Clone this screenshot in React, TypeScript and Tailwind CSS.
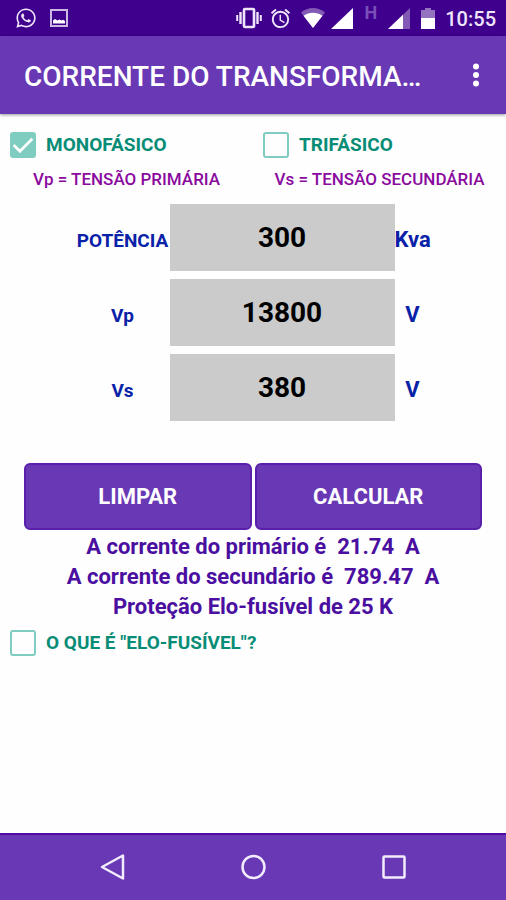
import React, { useState } from "react";
import { FaWhatsapp } from "react-icons/fa";
import { MdAlarm } from "react-icons/md";

type Phase = "mono" | "tri";

interface Result {
  primary: string;
  secondary: string;
  fuse: string;
}

// Corrente máxima (A) de cada elo-fusível
const FUSES: [number, string][] = [
  [1, "1 H"],
  [2, "2 H"],
  [3, "3 H"],
  [5, "5 H"],
  [6, "6 K"],
  [10, "10 K"],
  [15, "15 K"],
  [22, "25 K"],
  [40, "40 K"],
];

function calculate(power: string, vp: string, vs: string, phase: Phase): Result {
  const factor = phase === "tri" ? Math.sqrt(3) : 1;
  const va = Number(power) * 1000;
  const primary = va / (Number(vp) * factor);
  const secondary = va / (Number(vs) * factor);
  const fuse = FUSES.find(([max]) => primary <= max);

  return {
    primary: primary.toFixed(2),
    secondary: secondary.toFixed(2),
    fuse: fuse ? fuse[1] : "65 K",
  };
}

// ----------------------------------------------------
// Barra de status
// ----------------------------------------------------
function StatusBar() {
  return (
    <div className="flex h-9 items-center justify-between bg-[#3f008e] pr-[10px] pl-[15px] text-[#efe6fa]">
      <div className="flex items-center gap-3">
        <FaWhatsapp className="size-[22px]" />
        <svg viewBox="0 0 20 20" className="size-5" fill="none">
          <rect x="2" y="2" width="16" height="16" stroke="currentColor" strokeWidth="2" opacity="0.8" />
          <path d="M4 15.500V12.500l2-1.500 2.500 1.500 2-1 2 1 1.500-.8 2 1.300v2.500z" fill="#fff" />
        </svg>
      </div>
      <div className="flex items-center">
        <svg viewBox="0 0 26 22" className="h-[22px] w-[26px]" fill="none" stroke="currentColor">
          <rect x="8" y="2" width="10" height="18" rx="1" strokeWidth="2.600" />
          <path d="M4.500 5v12M21.500 5v12" strokeWidth="2.400" />
          <path d="M1.200 8v6M24.800 8v6" strokeWidth="2" />
        </svg>
        <MdAlarm className="ml-[7px] size-[23px]" />
        <svg viewBox="0 0 24 20" className="ml-[9px] h-5 w-6">
          <path d="M0 4.500C7-1.500 17-1.500 24 4.500L12 20z" fill="#fff" opacity="0.35" />
          <path d="M2.500 7.800C8 3.800 16 3.800 21.500 7.800L12 20z" fill="#fff" />
        </svg>
        <svg viewBox="0 0 22 21" className="ml-[6px] h-[21px] w-[22px]">
          <path d="M0 21L22 0v21z" fill="#fff" />
        </svg>
        <span className="mb-[10px] ml-[12px] text-lg leading-5 font-bold text-[#7a4fba]">H</span>
        <svg viewBox="0 0 22 21" className="ml-[11px] h-[21px] w-[22px]">
          <path d="M0 21L22 0v21z" fill="#fff" opacity="0.35" />
          <path d="M0 21L15 6.700V21z" fill="#fff" />
        </svg>
        <svg viewBox="0 0 14 21" className="ml-[11px] h-[21px] w-[14px]">
          <path d="M4 0h6v2h4v8H0V2h4z" fill="#fff" opacity="0.45" />
          <path d="M0 10h14v11H0z" fill="#fff" />
        </svg>
        <span className="ml-[10px] pt-[2px] text-xl leading-5 font-medium">10:55</span>
      </div>
    </div>
  );
}

interface CheckProps {
  label: string;
  checked: boolean;
  onChange: () => void;
}

function Check({ label, checked, onChange }: CheckProps) {
  return (
    <label className="flex items-center gap-[10px] text-[19px] leading-6 font-bold text-[#078c76]">
      <span className="relative size-[26px] shrink-0">
        <input
          type="checkbox"
          checked={checked}
          onChange={onChange}
          className="block size-full appearance-none rounded-[3px] border-2 border-[#7fccc1] checked:bg-[#7fccc1]"
        />
        {checked && (
          <svg viewBox="0 0 25 25" className="pointer-events-none absolute inset-0" fill="none">
            <path d="M3.500 12.500l6 6L21.500 6.500" stroke="#fff" strokeWidth="2.600" />
          </svg>
        )}
      </span>
      {label}
    </label>
  );
}

interface FieldProps {
  id: string;
  label: string;
  unit: string;
  value: string;
  onChange: (value: string) => void;
}

function Field({ id, label, unit, value, onChange }: FieldProps) {
  return (
    <div className="grid grid-cols-[94px_225px_36px] items-center justify-center text-center font-bold text-[#0a22a8]">
      <label htmlFor={id} className="pt-[6px] text-[19px] leading-6">
        {label}
      </label>
      <input
        id={id}
        inputMode="decimal"
        value={value}
        onChange={(e) => onChange(e.target.value)}
        className="h-[67px] w-full bg-[#cbcbcb] text-center text-[28px] font-bold text-black outline-none"
      />
      <span className="pt-1 text-[22px] leading-6">{unit}</span>
    </div>
  );
}

interface ActionButtonProps {
  children: React.ReactNode;
  onClick: () => void;
}

function ActionButton({ children, onClick }: ActionButtonProps) {
  return (
    <button
      type="button"
      onClick={onClick}
      className="h-[67px] flex-1 rounded-md border-2 border-[#5a20ab] bg-[#6838b5] text-[22px] font-bold text-white"
    >
      {children}
    </button>
  );
}

function NavBar() {
  return (
    <nav className="flex h-[67px] items-center justify-center gap-[113px] border-t-2 border-[#500aa5] bg-[#6838b5] pb-[2px] text-[#f3ecfc]">
      <button type="button" aria-label="Voltar">
        <svg viewBox="0 0 28 28" className="size-7" fill="none" stroke="currentColor" strokeWidth="2.500" strokeLinejoin="round">
          <path d="M4 14L25 2.500v23z" />
        </svg>
      </button>
      <button type="button" aria-label="Início">
        <svg viewBox="0 0 28 28" className="size-7" fill="none" stroke="currentColor" strokeWidth="2.500">
          <circle cx="14.500" cy="14" r="11" />
        </svg>
      </button>
      <button type="button" aria-label="Recentes">
        <svg viewBox="0 0 28 28" className="size-7" fill="none" stroke="currentColor" strokeWidth="2.500">
          <rect x="3.500" y="3.500" width="21" height="21" rx="1" />
        </svg>
      </button>
    </nav>
  );
}

// ----------------------------------------------------
// Tela principal
// ----------------------------------------------------
export default function App() {
  const [phase, setPhase] = useState<Phase>("mono");
  const [power, setPower] = useState("300");
  const [vp, setVp] = useState("13800");
  const [vs, setVs] = useState("380");
  const [showHelp, setShowHelp] = useState(false);
  const [result, setResult] = useState<Result | null>(() =>
    calculate("300", "13800", "380", "mono")
  );

  const handleClear = () => {
    setPower("");
    setVp("");
    setVs("");
    setResult(null);
  };

  const handleCalculate = () => {
    if (!Number(power) || !Number(vp) || !Number(vs)) return;
    setResult(calculate(power, vp, vs, phase));
  };

  return (
    <div className="flex min-h-screen flex-col bg-[#fefefe] font-[Roboto,sans-serif]">
      <StatusBar />
      <header className="flex h-[78px] items-center justify-between bg-[#6838b5] pr-4 pl-6 text-white shadow-[0_1px_3px_rgba(0,0,0,0.4)]">
        <h1 className="pt-1 text-[28px] leading-9 font-medium">CORRENTE DO TRANSFORMA…</h1>
        <button type="button" aria-label="Menu">
          <svg viewBox="0 0 28 28" className="size-7" fill="currentColor">
            <circle cx="14" cy="5.500" r="3" />
            <circle cx="14" cy="14" r="3" />
            <circle cx="14" cy="22.500" r="3" />
          </svg>
        </button>
      </header>

      <main className="flex-1 pt-[18px]">
        <div className="grid grid-cols-2">
          <div className="pl-[10px]">
            <Check label="MONOFÁSICO" checked={phase === "mono"} onChange={() => setPhase("mono")} />
          </div>
          <div className="pl-[10px]">
            <Check label="TRIFÁSICO" checked={phase === "tri"} onChange={() => setPhase("tri")} />
          </div>
        </div>
        <div className="mt-[9px] grid grid-cols-2 text-center text-[17px] leading-6 font-medium text-[#8a0a9e]">
          <p>Vp = TENSÃO PRIMÁRIA</p>
          <p>Vs = TENSÃO SECUNDÁRIA</p>
        </div>

        <div className="mt-[13px] flex flex-col gap-2">
          <Field id="potencia" label="POTÊNCIA" unit="Kva" value={power} onChange={setPower} />
          <Field id="vp" label="Vp" unit="V" value={vp} onChange={setVp} />
          <Field id="vs" label="Vs" unit="V" value={vs} onChange={setVs} />
        </div>

        <div className="mt-[42px] flex gap-[3px] px-6">
          <ActionButton onClick={handleClear}>LIMPAR</ActionButton>
          <ActionButton onClick={handleCalculate}>CALCULAR</ActionButton>
        </div>

        {result && (
          <div className="mt-[2px] text-center text-[22px] leading-[30px] font-bold whitespace-pre-wrap text-[#4a0fa0]">
            <p>{`A corrente do primário é  ${result.primary}  A`}</p>
            <p>{`A corrente do secundário é  ${result.secondary}  A`}</p>
            <p>{`Proteção Elo-fusível de ${result.fuse}`}</p>
          </div>
        )}

        <div className="mt-2 pl-[10px]">
          <Check label={'O QUE É "ELO-FUSÍVEL"?'} checked={showHelp} onChange={() => setShowHelp(!showHelp)} />
          {showHelp && (
            <p className="mt-2 pr-4 text-lg text-[#4a0fa0]">
              Dispositivo que protege o transformador contra sobrecorrente.
            </p>
          )}
        </div>
      </main>

      <NavBar />
    </div>
  );
}
